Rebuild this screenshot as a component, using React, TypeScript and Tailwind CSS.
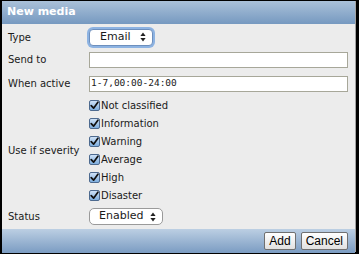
import { useState } from "react";

const SEVERITIES = [
  "Not classified",
  "Information",
  "Warning",
  "Average",
  "High",
  "Disaster",
];

function SelectArrows() {
  return (
    <svg width="6" height="10" viewBox="0 0 6 10" className="shrink-0">
      <path d="M3 0.5 L5.6 4 H0.4 Z" fill="#222" />
      <path d="M3 9.5 L5.6 6 H0.4 Z" fill="#222" />
    </svg>
  );
}

function CheckBox({ checked }: { checked: boolean }) {
  return (
    <span className="flex h-[11px] w-[11px] shrink-0 items-center justify-center rounded-[2px] border border-[#4d6a8f] bg-gradient-to-b from-[#cfe2f7] to-[#7eaede]">
      {checked && (
        <svg width="9" height="9" viewBox="0 0 9 9">
          <path
            d="M1.2 4.6 L3.6 7.2 L7.9 1.2"
            fill="none"
            stroke="#111"
            strokeWidth="1.7"
            strokeLinecap="round"
            strokeLinejoin="round"
          />
        </svg>
      )}
    </span>
  );
}

export default function App() {
  const [checked] = useState<boolean[]>(SEVERITIES.map(() => true));

  return (
    <div className="h-[254px] w-[359px] bg-black pt-px pb-[2px] pl-[2px] pr-[3px] font-['DejaVu_Sans',sans-serif] text-[10px] text-[#1a1a1a]">
      <div className="flex h-full flex-col border-r border-[#a3a3a3] bg-[#ececec]">
        <div className="flex h-[23px] shrink-0 items-center bg-gradient-to-b from-[#aac1d9] to-[#7699c0] pl-[5px] text-[11px] font-bold text-white">
          New media
        </div>

        <div className="flex flex-1 flex-col pt-[2px] pl-[6px] pr-[7px]">
          <div className="flex h-[22px] items-center">
            <span className="w-[81px]">Type</span>
            <div className="flex h-[17px] w-[64px] items-center justify-between rounded-[4px] border border-[#6d8fbd] bg-white pl-[10px] pr-[6px] text-[11px] shadow-[0_0_0_2px_#8db3e2]">
              <span>Email</span>
              <SelectArrows />
            </div>
          </div>

          <div className="flex h-[23px] items-center">
            <span className="w-[81px]">Send to</span>
            <div className="h-[16px] flex-1 border border-[#a7a799] bg-white" />
          </div>

          <div className="flex h-[25px] items-center">
            <span className="w-[81px]">When active</span>
            <div className="flex h-[16px] flex-1 items-center border border-[#a7a799] bg-white pl-[1px] font-['DejaVu_Sans_Mono',monospace] text-[9.5px]">
              1-7,00:00-24:00
            </div>
          </div>

          <div className="flex items-center">
            <span className="w-[81px]">Use if severity</span>
            <div className="flex flex-col">
              {SEVERITIES.map((name, i) => (
                <label key={name} className="flex h-[18px] items-center gap-[1px]">
                  <CheckBox checked={checked[i]} />
                  <span>{name}</span>
                </label>
              ))}
            </div>
          </div>

          <div className="flex h-[25px] items-center">
            <span className="w-[81px]">Status</span>
            <div className="flex h-[17px] w-[74px] items-center justify-between rounded-[5px] border border-[#9a9a9a] bg-white pl-[9px] pr-[6px] text-[11px]">
              <span>Enabled</span>
              <SelectArrows />
            </div>
          </div>
        </div>

        <div className="flex h-[24px] shrink-0 items-center justify-end gap-[5px] bg-gradient-to-b from-[#bccfe3] to-[#7b9cc2] pr-[7px] font-['Liberation_Sans',sans-serif] text-[12px]">
          <button
            type="button"
            className="h-[18px] rounded-[2px] border border-[#707070] bg-gradient-to-b from-white to-[#e1e1e1] px-[4px] leading-none text-black"
          >
            Add
          </button>
          <button
            type="button"
            className="h-[18px] rounded-[2px] border border-[#707070] bg-gradient-to-b from-white to-[#e1e1e1] px-[4px] leading-none text-black"
          >
            Cancel
          </button>
        </div>
      </div>
    </div>
  );
}
